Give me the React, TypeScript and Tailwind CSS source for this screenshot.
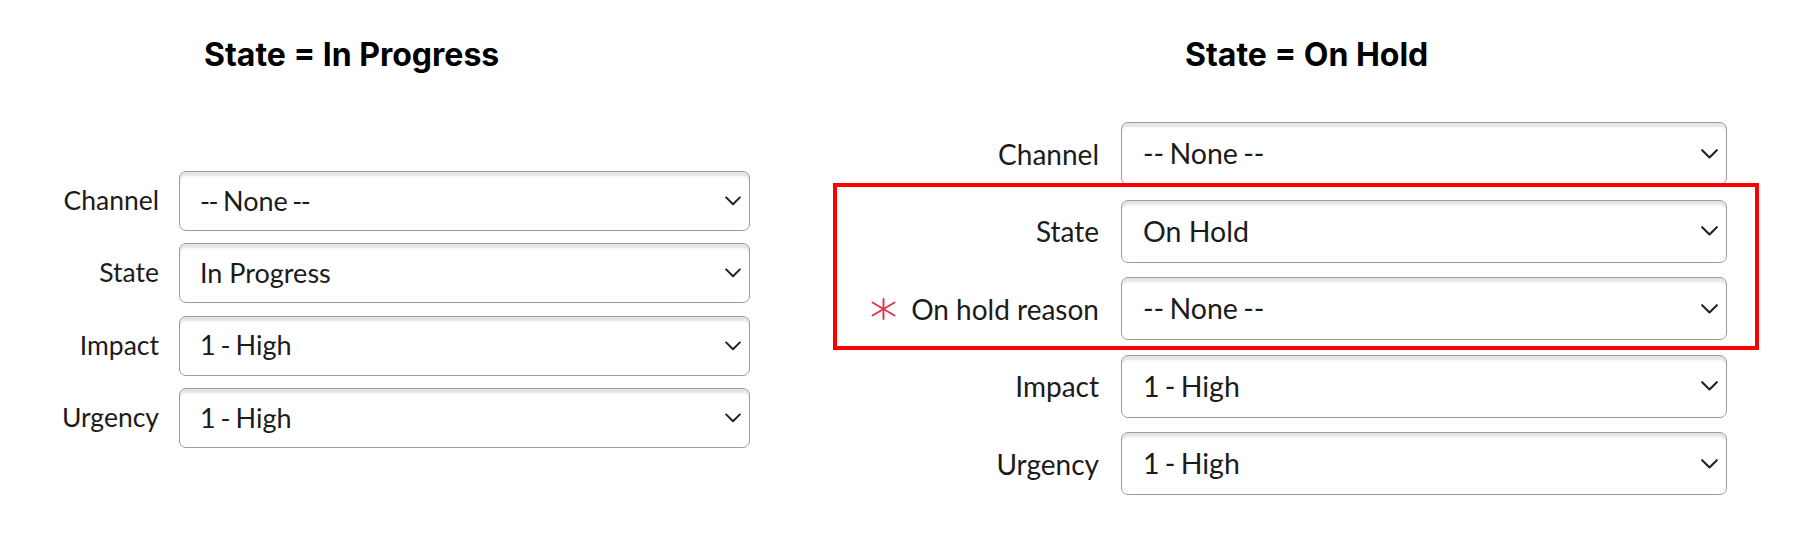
import React from "react";

const Chevron = ({ className = "" }: { className?: string }) => (
  <svg className={className} viewBox="0 0 17 10" fill="none">
    <path d="M1.2 1.2 L8.5 8.5 L15.8 1.2" stroke="#222" strokeWidth="2.1" strokeLinecap="round" strokeLinejoin="round" />
  </svg>
);

const Asterisk = () => (
  <svg className="w-[25px] h-[22px]" viewBox="0 0 25 22" fill="none">
    <g stroke="#e5304a" strokeWidth="1.9" strokeLinecap="round">
      <line x1="12.5" y1="1" x2="12.5" y2="21" />
      <line x1="1.5" y1="4.5" x2="23.5" y2="17.5" />
      <line x1="1.5" y1="17.5" x2="23.5" y2="4.5" />
    </g>
  </svg>
);

const NoneTextLeft = () => (
  <span className="whitespace-pre [word-spacing:-2.5px]">
    <span className="tracking-[-1.5px]">-</span>- None <span className="tracking-[-1.5px]">-</span>-
  </span>
);

const SelectBox = ({ children, size }: { children: React.ReactNode; size: "l" | "r" }) => (
  <div
    className={
      size === "l"
        ? "relative flex items-center w-[571px] h-[60px] pl-[20px] rounded-[7px] border border-[#979ca5] bg-white shadow-[inset_0_5px_2px_-1px_#e4e5e6] text-[27px] text-[#1b1b1b]"
        : "relative flex items-center w-[606px] h-[63px] pl-[21px] rounded-[7px] border border-[#979ca5] bg-white shadow-[inset_0_5px_2px_-1px_#e4e5e6] text-[28.5px] text-[#1b1b1b]"
    }
  >
    {children}
    <Chevron
      className={
        size === "l"
          ? "absolute right-[8px] top-1/2 -translate-y-1/2 w-[16px] h-[10px]"
          : "absolute right-[8px] top-1/2 -translate-y-1/2 w-[17px] h-[10px]"
      }
    />
  </div>
);

const LeftRow = ({ label, children }: { label: string; children: React.ReactNode }) => (
  <div className="flex items-center gap-[20px]">
    <div className="w-[159px] text-right text-[26.5px] text-[#1b1b1b]">{label}</div>
    <SelectBox size="l">{children}</SelectBox>
  </div>
);

const RightRow = ({ label, children, required }: { label: string; children: React.ReactNode; required?: boolean }) => (
  <div className="flex items-center gap-[22px]">
    <div className="w-[266px] flex items-center justify-end gap-[15px] text-[28px] text-[#1b1b1b]">
      {required && <Asterisk />}
      <span>{label}</span>
    </div>
    <SelectBox size="r">{children}</SelectBox>
  </div>
);

export default function App() {
  return (
    <div
      className="w-[1819px] h-[535px] bg-white flex"
      style={{ fontFamily: "Lato, 'Noto Sans', sans-serif" }}
    >
      <div className="w-[833px] shrink-0">
        <h2
          className="pl-[204px] pt-[36px] text-[32px] leading-[38px] font-bold text-black"
          style={{ fontFamily: "Inter, 'Liberation Sans', sans-serif" }}
        >
          State = In Progress
        </h2>
        <div className="mt-[97px] flex flex-col gap-[12.3px]">
          <LeftRow label="Channel"><NoneTextLeft /></LeftRow>
          <LeftRow label="State"><span className="whitespace-pre">In Progress</span></LeftRow>
          <LeftRow label="Impact"><span className="whitespace-pre [word-spacing:-2px]">1 - High</span></LeftRow>
          <LeftRow label="Urgency"><span className="whitespace-pre [word-spacing:-2px]">1 - High</span></LeftRow>
        </div>
      </div>
      <div className="w-[930px] shrink-0">
        <h2
          className="pl-[352px] pt-[36px] text-[32px] leading-[38px] font-bold text-black"
          style={{ fontFamily: "Inter, 'Liberation Sans', sans-serif" }}
        >
          State = On Hold
        </h2>
        <div className="mt-[48px] flex flex-col gap-[14.5px]">
          <RightRow label="Channel"><span className="whitespace-pre [word-spacing:-2px]">-- None --</span></RightRow>
          <div className="relative flex flex-col gap-[14.5px]">
            <div className="absolute left-0 top-[-17px] w-[926px] h-[167px] border-[4px] border-[#ff0000] pointer-events-none" />
            <RightRow label="State"><span className="whitespace-pre">On Hold</span></RightRow>
            <RightRow label="On hold reason" required><span className="whitespace-pre [word-spacing:-2px]">-- None --</span></RightRow>
          </div>
          <RightRow label="Impact"><span className="whitespace-pre [word-spacing:-2px]">1 - High</span></RightRow>
          <RightRow label="Urgency"><span className="whitespace-pre [word-spacing:-2px]">1 - High</span></RightRow>
        </div>
      </div>
    </div>
  );
}
